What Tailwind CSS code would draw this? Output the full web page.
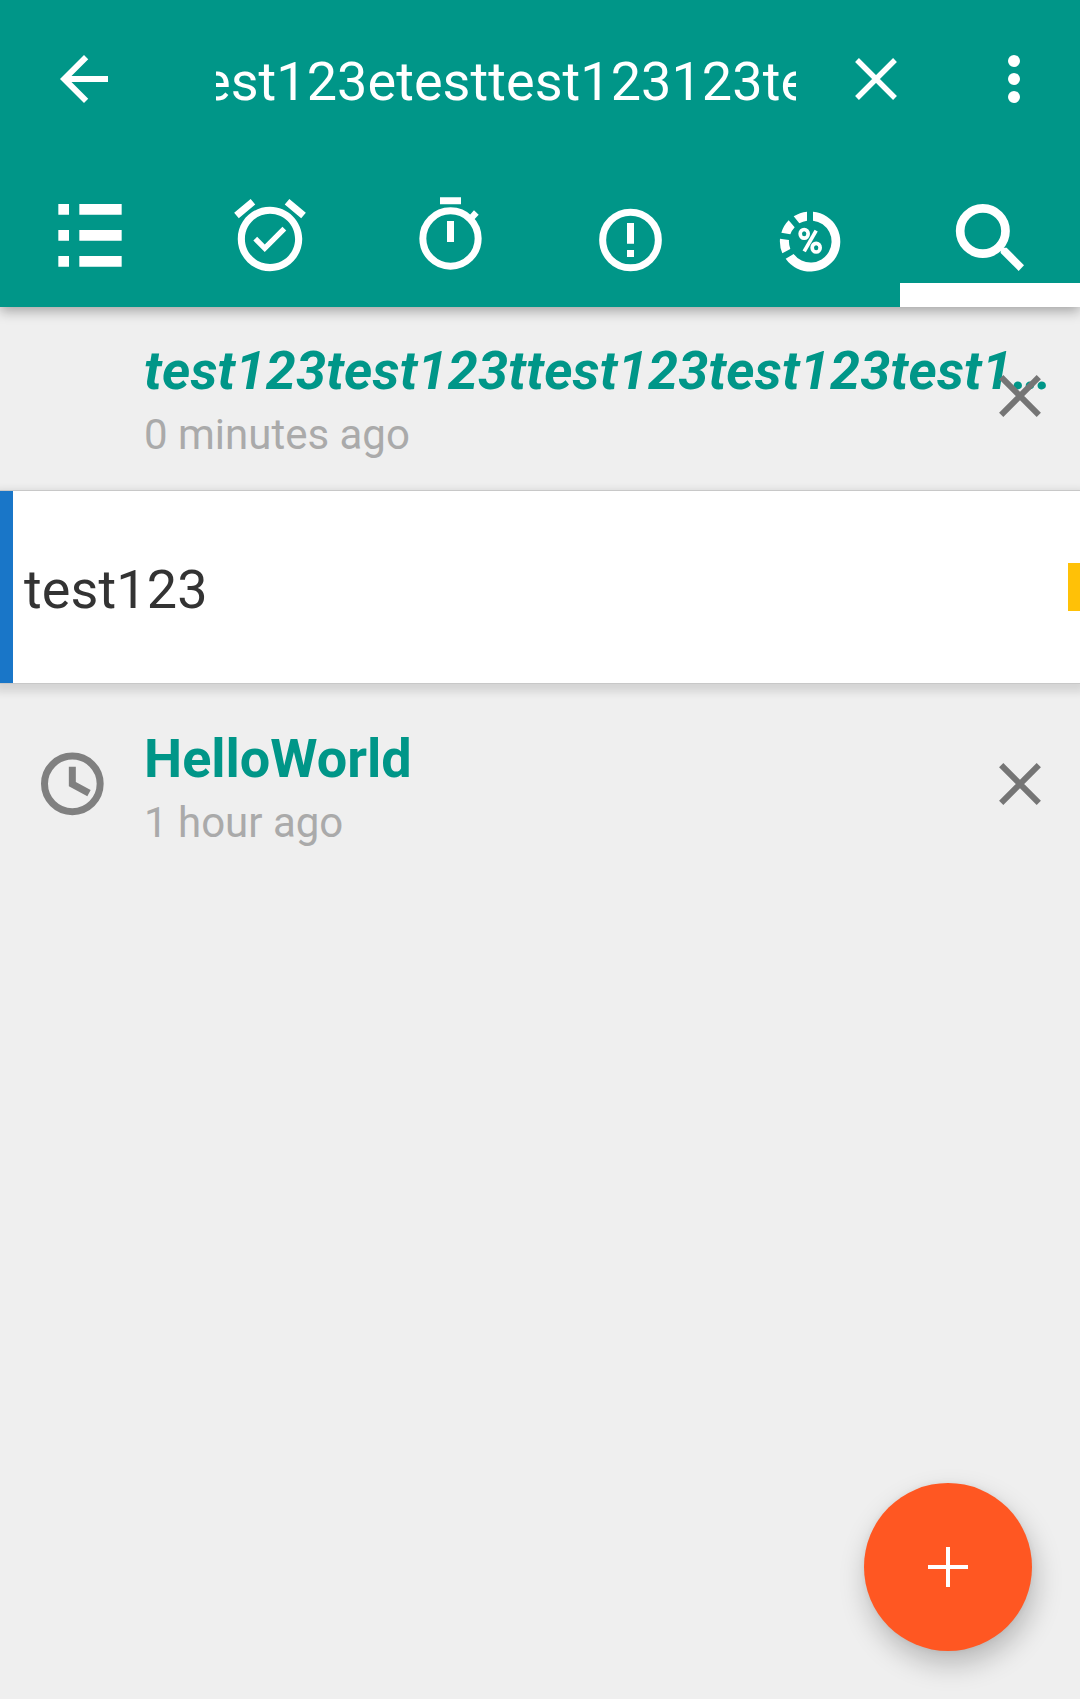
<!DOCTYPE html>
<html lang="en">
<head>
<meta charset="utf-8">
<title>Search</title>
<script src="https://cdn.jsdelivr.net/npm/@tailwindcss/browser@4"></script>
</head>
<body class="bg-[#efefef] font-['Roboto',sans-serif]">
<div class="relative flex h-[1699px] w-[1080px] flex-col overflow-hidden bg-[#efefef]">
  <header class="relative z-10 flex h-[307px] shrink-0 flex-col bg-[#009688] text-white shadow-[0_4px_12px_rgba(0,0,0,0.32)]">
    <div class="flex h-[158px] items-center">
      <svg class="ml-12 size-[72px] shrink-0" viewBox="0 0 24 24" fill="currentColor"><path d="M20 11H7.83l5.59-5.59L12 4l-8 8 8 8 1.41-1.41L7.83 13H20v-2z"/></svg>
      <div class="ml-24 flex w-[580px] shrink-0 overflow-hidden pt-1.5 text-[54px] leading-[64px] tracking-[0.05px] whitespace-nowrap"><span class="-ml-[14px]">est123etesttest123123te</span></div>
      <svg class="ml-11 size-[72px] shrink-0" viewBox="0 0 72 72" fill="none" stroke="currentColor" stroke-width="5.4"><path d="M17 17l38 38M55 17L17 55"/></svg>
      <svg class="ml-[66px] size-[72px] shrink-0" viewBox="0 0 72 72" fill="currentColor"><circle cx="36" cy="18" r="6"/><circle cx="36" cy="36" r="6"/><circle cx="36" cy="54" r="6"/></svg>
    </div>
    <div class="h-3"></div>
    <nav class="grid h-[137px] grid-cols-6">
      <svg class="h-[137px] w-[180px]" viewBox="0 0 540 411" fill="currentColor"><path d="M175 102h32v32h-32zM238 102h127v32H238zM175 180h32v32h-32zM238 180h127v32H238zM175 258h32v32h-32zM238 258h127v32H238z"/></svg>
      <svg class="h-[137px] w-[180px]" viewBox="0 0 540 411" fill="currentColor"><path transform="translate(141 67) scale(10.75)" d="M22 5.72l-4.6-3.86-1.29 1.53 4.6 3.86L22 5.72zM7.88 3.39L6.6 1.86 2 5.71l1.29 1.53 4.59-3.85zM12 4c-4.97 0-9 4.03-9 9s4.02 9 9 9c4.97 0 9-4.03 9-9s-4.03-9-9-9zm0 16c-3.87 0-7-3.13-7-7s3.13-7 7-7 7 3.13 7 7-3.13 7-7 7zm-1.46-5.47L8.41 12.4l-1.06 1.06 3.18 3.18 6-6-1.06-1.06-4.93 4.95z"/></svg>
      <svg class="h-[137px] w-[180px]" viewBox="0 0 540 411" fill="none" stroke="currentColor" stroke-width="21"><circle cx="271.5" cy="205.5" r="83"/><path d="M240 92.5h63M271.5 153v63"/><path stroke-width="19" d="M333 145l16-17.500"/></svg>
      <svg class="h-[137px] w-[180px]" viewBox="0 0 540 411" fill="none" stroke="currentColor" stroke-width="21"><circle cx="271.500" cy="210" r="83.500"/><path d="M271.500 159v62M271.500 240v21"/></svg>
      <svg class="h-[137px] w-[180px]" viewBox="0 0 540 411" fill="currentColor"><path d="M279 125A90 90 0 1 1 197 266L221 252A63 63 0 1 0 279 152ZM187 250A90 90 0 0 1 180 206L207 210A63 63 0 0 0 211 237ZM184 188A90 90 0 0 1 206 151L224 172A63 63 0 0 0 211 193ZM221 139A90 90 0 0 1 261 125V152A63 63 0 0 0 238 160Z"/><g fill="none" stroke="currentColor"><ellipse cx="252.500" cy="191.500" rx="12" ry="13" stroke-width="11"/><ellipse cx="288.500" cy="233" rx="12" ry="13" stroke-width="11"/><path stroke-width="11" d="M252.500 244L288.500 182"/></g></svg>
      <div class="relative">
        <svg class="h-[137px] w-[180px]" viewBox="0 0 540 411" fill="currentColor"><circle cx="248.500" cy="183" r="68" fill="none" stroke="currentColor" stroke-width="26"/><path d="M308 233h12l52 53-16 17-54-54v-12z"/></svg>
        <div class="absolute inset-x-0 bottom-0 h-6 bg-white"></div>
      </div>
    </nav>
  </header>

  <main class="flex flex-col">
    <section class="relative h-[184px] pt-8 pl-[144px]">
      <div class="w-[910px] text-[54px] leading-[64px] font-bold tracking-[0.19px] text-[#009688] italic whitespace-nowrap">test123test123ttest123test123test1…</div>
      <div class="mt-[7px] text-[42px] leading-[50px] text-[#aaa]">0 minutes ago</div>
      <svg class="absolute top-[53px] right-6 size-[72px] text-[#757575]" viewBox="0 0 72 72" fill="none" stroke="currentColor" stroke-width="6"><path d="M17.200 17.200l37.600 37.600M54.800 17.200L17.200 54.800"/></svg>
    </section>
    <section class="relative flex h-48 items-center bg-white shadow-[0_0_0_1px_#c8c8c8,0_4px_8px_5px_rgba(0,0,0,0.11)]">
      <div class="h-full w-[13px] bg-[#1976c8]"></div>
      <div class="ml-[11px] grow pt-1.5 text-[54px] leading-[64px] tracking-[0.1px] text-[#333]">test123</div>
      <div class="h-12 w-3 bg-[#ffc107]"></div>
    </section>
    <section class="flex h-[202px] items-center pr-6">
      <svg class="ml-9 size-[72px] shrink-0 text-[#808080]" viewBox="0 0 216 216" fill="none" stroke="currentColor" stroke-width="21"><circle cx="109" cy="107.500" r="83.500"/><path d="M109 56v52.500l50 27"/></svg>
      <div class="ml-9 flex grow flex-col pt-1.5">
        <div class="text-[54px] leading-[64px] font-bold text-[#009688]">HelloWorld</div>
        <div class="mt-[7px] text-[42px] leading-[50px] text-[#aaa]">1 hour ago</div>
      </div>
      <svg class="size-[72px] shrink-0 text-[#757575]" viewBox="0 0 72 72" fill="none" stroke="currentColor" stroke-width="6"><path d="M17.200 17.200l37.600 37.600M54.800 17.200L17.200 54.800"/></svg>
    </section>
  </main>

  <button class="absolute right-12 bottom-12 flex size-[168px] items-center justify-center rounded-full bg-[#ff5722] text-white shadow-[3px_13px_28px_rgba(0,0,0,0.23),0_0_6px_rgba(0,0,0,0.06)]">
    <svg class="size-10" viewBox="0 0 40 40" fill="none" stroke="currentColor" stroke-width="4"><path d="M20 0v40M0 20h40"/></svg>
  </button>
</div>
</body>
</html>
